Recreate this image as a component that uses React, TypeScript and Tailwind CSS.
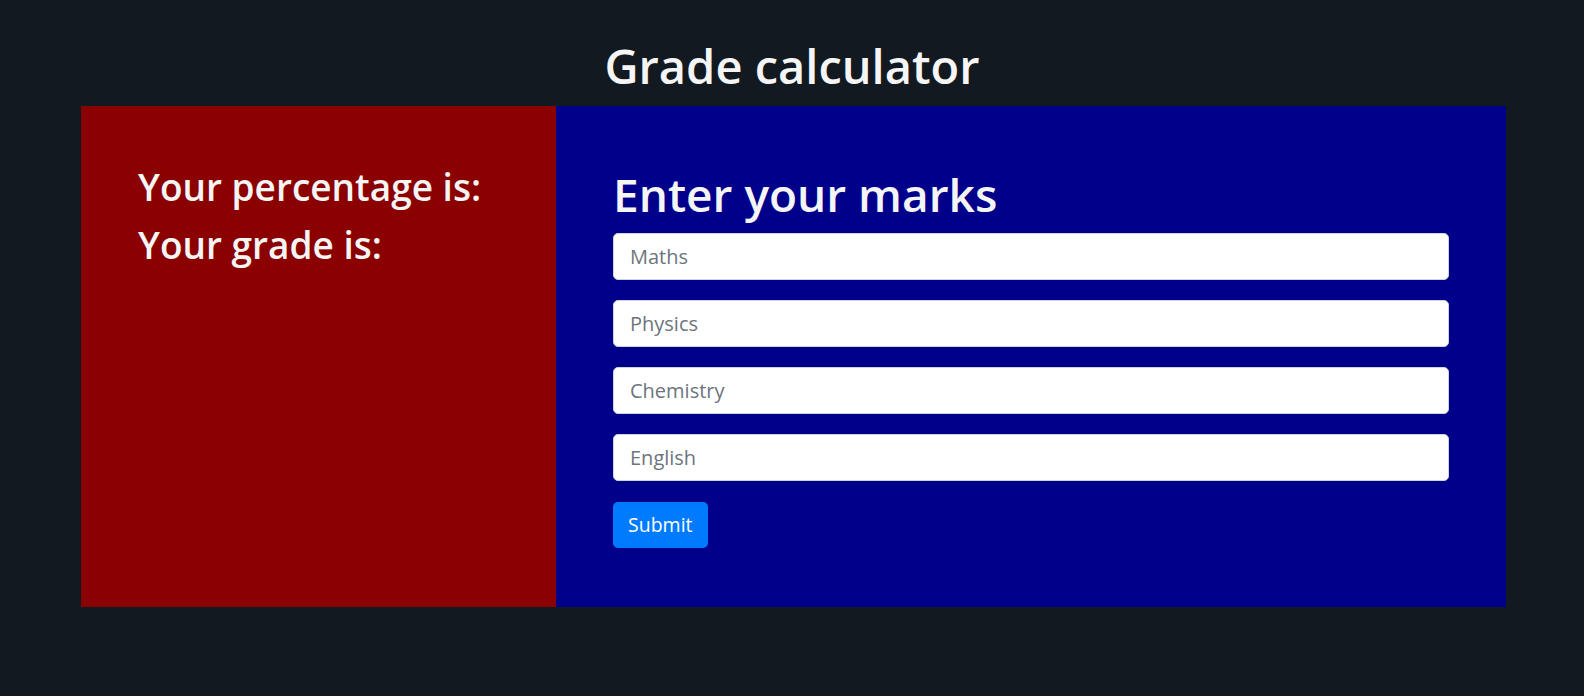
const subjects = ["Maths", "Physics", "Chemistry", "English"];

const App = () => {
	return (
		<div className="min-h-screen bg-[#131920] pt-[43px] font-['Open_Sans',sans-serif] text-[#f5f5f5]">
			<h1 className="mb-[16px] text-center text-[47px] leading-[47px] font-semibold">Grade calculator</h1>
			<div className="ml-[81px] flex h-[501px] w-[1425px]">
				<div className="flex w-[475px] flex-col gap-[21px] bg-[#8b0000] pl-[57px] pt-[62px]">
					<p className="text-[37px] leading-[37px] font-semibold">Your percentage is:</p>
					<p className="text-[37px] leading-[37px] font-semibold">Your grade is:</p>
				</div>
				<div className="flex flex-1 flex-col bg-[#00008b] px-[57px] pt-[65px]">
					<h2 className="mb-[16px] text-[46px] leading-[46px] font-semibold">Enter your marks</h2>
					<form className="flex flex-col gap-[20px]" onSubmit={(e) => e.preventDefault()}>
						{subjects.map((s) => (
							<input
								key={s}
								type="text"
								placeholder={s}
								className="h-[47px] w-full rounded-[5px] border border-[#ced4da] bg-white px-4 text-[20px] text-[#495057] placeholder:text-[#6c757d] outline-none"
							/>
						))}
						<div>
							<button
								type="submit"
								className="mt-px h-[46px] rounded-[5px] bg-[#007bff] px-[15px] text-[19.5px] text-white"
							>
								Submit
							</button>
						</div>
					</form>
				</div>
			</div>
		</div>
	);
};

export default App;
